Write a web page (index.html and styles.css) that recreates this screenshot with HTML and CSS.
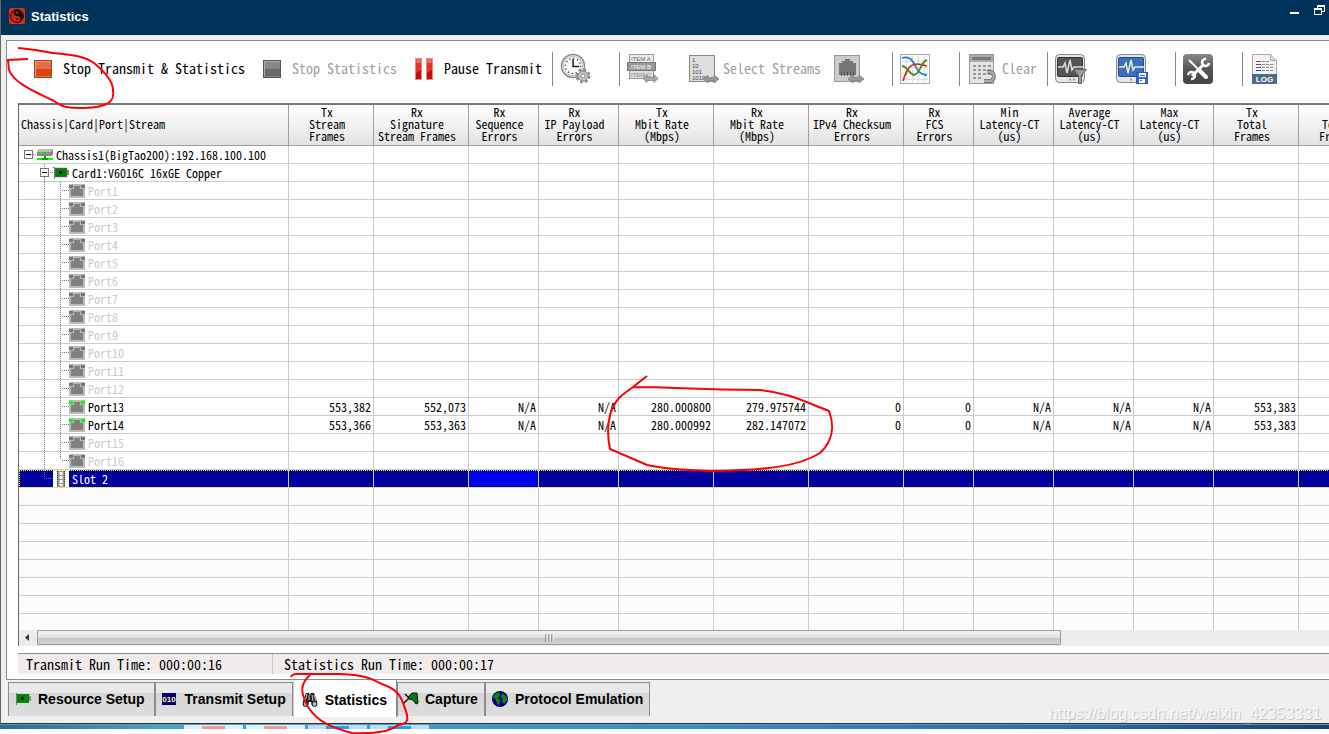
FILE: index.html
```html
<!DOCTYPE html>
<html lang="en">
<head>
<meta charset="utf-8">
<title>Statistics</title>
<link rel="stylesheet" href="styles.css">
</head>
<body>
<div class="window">
  <header class="titlebar">
    <svg class="logo" width="16" height="16" viewBox="0 0 16 16"><rect width="16" height="16" rx="2" fill="#e02a1c"/><circle cx="8" cy="8" r="6.5" fill="#1a0a0a"/><path d="M8 1.5a6.5 6.5 0 0 0 0 13 3.2 3.2 0 0 0 0-6.5 3.2 3.2 0 0 1 0-6.5z" fill="#c8281c"/><circle cx="8" cy="4.8" r="1" fill="#e02a1c"/><circle cx="8" cy="11.2" r="1" fill="#1a0a0a"/><circle cx="8" cy="8" r="6.5" fill="none" stroke="#3a0808"/></svg>
    <h1 class="title">Statistics</h1>
    <button class="winbtn minimize" aria-label="Minimize"><svg width="10" height="12" viewBox="0 0 10 12"><path d="M0 7h9v2H0z" fill="#fff"/></svg></button>
    <button class="winbtn" aria-label="Restore"><svg width="12" height="12" viewBox="0 0 12 12"><path d="M3.500 3V.5h7v6H8" fill="none" stroke="#fff"/><path d="M3 0h8v2H3z" fill="#fff"/><path d="M.5 3.500h7v6h-7z" fill="#003359" stroke="#fff"/><path d="M0 3h8v2H0z" fill="#fff"/></svg></button>
  </header>

  <main class="panel">
    <div class="toolbar">
      <button class="tool first"><svg width="18" height="18" viewBox="0 0 18 18"><rect x=".5" y=".5" width="17" height="17" fill="#d8441c" stroke="#bd3c14"/><path d="M1 1h16v8H1z" fill="#e0704c"/><path d="M1.500 16.500v-15h15" fill="none" stroke="#ef9a7a"/><path d="M2 16.500h15" stroke="#f06a30"/></svg><span>Stop Transmit &amp; Statistics</span></button>
      <button class="tool next" disabled><svg width="18" height="18" viewBox="0 0 18 18"><rect x=".5" y=".5" width="17" height="17" fill="#696969" stroke="#555"/><path d="M1 1h16v8H1z" fill="#888"/><path d="M1.500 16.500v-15h15" fill="none" stroke="#aaa"/><path d="M2 16.500h15" stroke="#888"/></svg><span>Stop Statistics</span></button>
      <button class="tool next"><svg width="18" height="22" viewBox="0 0 18 22"><g stroke="#e88a80"><rect x=".5" y=".5" width="6" height="21" fill="#e8352a"/><rect x="11.500" y=".5" width="6" height="21" fill="#e8352a"/></g><path d="M1 15l5-3v9H1zM12 15l5-3v9h-5z" fill="#c01010"/><path d="M1 1h5v4H1zM12 1h5v4h-5z" fill="#f06a5c"/></svg><span>Pause Transmit</span></button>
      <i class="sep near"></i>
      <button class="tool" aria-label="Timing settings"><svg width="32" height="32" viewBox="0 0 32 32"><circle cx="13" cy="13" r="11.500" fill="#eee" stroke="#8b8b8b" stroke-width="1.500"/><circle cx="13" cy="13" r="9.500" fill="#fafafa" stroke="#bbb"/><circle cx="13" cy="13" r="7.500" fill="none" stroke="#333" stroke-width="1.300" stroke-dasharray="1.200 2.727"/><path d="M13 6v7.500h6" fill="none" stroke="#222" stroke-width="1.500"/><circle cx="23" cy="23" r="6.200" fill="none" stroke="#888" stroke-width="2.400" stroke-dasharray="2.600 2.270"/><circle cx="23" cy="23" r="5" fill="#c4c4c4" stroke="#888"/><circle cx="23" cy="23" r="2" fill="#fff" stroke="#888"/></svg></button>
      <i class="sep"></i>
      <button class="tool" aria-label="Select items"><svg width="32" height="32" viewBox="0 0 32 32"><rect x="2.500" y="1.500" width="24" height="8" fill="#eee" stroke="#999"/><rect x="2.500" y="17.500" width="24" height="8" fill="#ddd" stroke="#999"/><rect x=".5" y="9.500" width="28" height="8" fill="#999" stroke="#777"/><g font-family="Liberation Sans" font-size="6"><text x="4" y="8" fill="#666">ITEM A</text><text x="4" y="16" fill="#fff">ITEM B</text><text x="4" y="24" fill="#888">ITEM C</text></g><path d="M16 25.500l4-4v3h7v-3l4 4-4 4v-2h-7v2z" fill="#aaa" stroke="#777" stroke-width=".7"/></svg></button>
      <button class="tool tight apart" disabled><svg width="32" height="32" viewBox="0 0 32 32"><rect x="1.500" y="2.500" width="25" height="26" fill="#dedede" stroke="#888"/><g font-family="Liberation Sans" font-size="6" fill="#444"><text x="4" y="9">1</text><text x="4" y="15">10</text><text x="4" y="21">101</text><text x="4" y="27">1010</text></g><path d="M15 26l5-4v2.500h6V22l5 4-5 4v-2.500h-6V30z" fill="#999" stroke="#777" stroke-width=".7"/></svg><span>Select Streams</span></button>
      <button class="tool near" aria-label="Select port"><svg width="32" height="32" viewBox="0 0 32 32"><rect x="1.500" y="2.500" width="25" height="26" fill="#ccc" stroke="#999"/><path d="M6 22V10h3V8h3V6h5v2h3v2h3v12z" fill="#777"/><path d="M8.500 19v4M11.500 19v4M14.500 19v4M17.500 19v4M20.500 19v4" stroke="#555"/><path d="M15 26l5-4v2.500h6V22l5 4-5 4v-2.500h-6V30z" fill="#999" stroke="#777" stroke-width=".7"/></svg></button>
      <i class="sep"></i>
      <button class="tool" aria-label="Chart"><svg width="32" height="32" viewBox="0 0 32 32"><rect x=".5" y="1.500" width="29" height="29" fill="#fafafa" stroke="#aaa"/><path d="M6.500 3v26M12.500 3v26M18.500 3v26M24.500 3v26M2 8.500h26M2 14.500h26M2 20.500h26M2 26.500h26" stroke="#ddd"/><g fill="none" stroke-width="1.800"><path d="M2 5c10-3 12 6 15 11 3 5 6 6 10 6" stroke="#2288cc"/><path d="M3 28c5-16 9-20 24-15" stroke="#d82a1e"/><path d="M2 13c5 0 7 8 12 9 6 0 7-14 13-15" stroke="#469118"/></g></svg></button>
      <i class="sep"></i>
      <button class="tool tight" disabled><svg width="32" height="32" viewBox="0 0 32 32"><rect x="2.500" y="1.500" width="24" height="29" fill="#e4e4e4" stroke="#999"/><rect x="3" y="2" width="23" height="7" fill="#aaa"/><rect x="5" y="4" width="19" height="3" fill="#777"/><g stroke="#999" stroke-width="2" stroke-dasharray="3 2"><path d="M6 13h18M6 17h18M6 21h18M6 25h10"/></g><path d="M17 28h7a5 5 0 0 0 0-9h-4" fill="none" stroke="#777" stroke-width="4"/><path d="M17 28h7a5 5 0 0 0 0-9h-4" fill="none" stroke="#aaa" stroke-width="2"/></svg><span>Clear</span></button>
      <i class="sep near"></i>
      <button class="tool" aria-label="Filter results"><svg width="32" height="32" viewBox="0 0 32 32"><rect x=".5" y="1.500" width="29" height="28" rx="4" fill="#e6e6e6" stroke="#888"/><rect x="2.500" y="4.500" width="25" height="19" rx="1" fill="#555" stroke="#333"/><path d="M3 14h5l2-4 2 10 3-13 2 10 2-3h9" fill="none" stroke="#ddd" stroke-width="1.500"/><path d="M14 26.500h2M18 26.500h2" stroke="#999" stroke-width="2"/><path d="M18.500 16.500h13l-5 6v8h-3v-8z" fill="#999" stroke="#666"/></svg></button>
      <button class="tool apart" aria-label="Save results"><svg width="32" height="32" viewBox="0 0 32 32"><rect x=".5" y="1.500" width="29" height="28" rx="4" fill="#e6e6e6" stroke="#888"/><rect x="2.500" y="4.500" width="25" height="19" rx="1" fill="#3b6fc4" stroke="#274a86"/><path d="M3 14h5l2-4 2 10 3-13 2 10 2-3h9" fill="none" stroke="#dff5c0" stroke-width="1.500"/><path d="M14 26.500h2" stroke="#999" stroke-width="2"/><rect x="20.500" y="19.500" width="11" height="11" fill="#3c68d0" stroke="#3058b8"/><path d="M23 20h7v4h-7zM23 26h6v4h-6z" fill="#fff"/><path d="M24 22.500h5M24 27.500h2" stroke="#3c68d0"/></svg></button>
      <i class="sep"></i>
      <button class="tool" aria-label="Options"><svg width="32" height="32" viewBox="0 0 32 32"><defs><linearGradient id="dark" x2="0" y2="1"><stop stop-color="#888"/><stop offset=".5" stop-color="#555"/><stop offset="1" stop-color="#444"/></linearGradient></defs><rect x="0" y="1" width="30" height="30" rx="4" fill="url(#dark)"/><path d="M6 7l9 9" stroke="#fff" stroke-width="2"/><path d="M16 17l7 7" stroke="#fff" stroke-width="4" stroke-linecap="round"/><path d="M9 23l12-12" stroke="#fff" stroke-width="3"/><path d="M23 6a3.500 3.500 0 1 0 3 4M5 22a3.500 3.500 0 1 1 3 4" fill="none" stroke="#fff" stroke-width="2.500"/></svg></button>
      <i class="sep"></i>
      <button class="tool" aria-label="Log"><svg width="32" height="32" viewBox="0 0 32 32"><path d="M2.500 1.500h18l6 6v23h-24z" fill="#f4f4f4" stroke="#aaa"/><path d="M20.500 1.500v6h6" fill="#ddd" stroke="#aaa"/><path d="M6 8.500h5M6 14.500h5" stroke="#d22"/><path d="M6 11.500h5M6 17.500h5" stroke="#25b"/><path d="M12 8.500h7M12 11.500h12M12 14.500h12M12 17.500h12" stroke="#888" stroke-dasharray="3 1"/><rect x="2" y="21" width="25" height="10" fill="#4d6d8c"/><text x="14.500" y="29" font-family="Liberation Sans" font-size="8" font-weight="700" fill="#fff" text-anchor="middle">LOG</text></svg></button>
    </div>

    <div class="gridbox">
      <div class="viewport">
        <table class="grid">
          <colgroup>
            <col class="c270"><col class="c85"><col class="c95"><col class="c70"><col class="c80"><col class="c95"><col class="c95"><col class="c95"><col class="c70"><col class="c80"><col class="c80"><col class="c80"><col class="c85"><col class="c85">
          </colgroup>
          <thead>
            <tr><th class="tree">Chassis|Card|Port|Stream</th><th>Tx<br>Stream<br>Frames</th><th>Rx<br>Signature<br>Stream Frames</th><th>Rx<br>Sequence<br>Errors</th><th>Rx<br>IP Payload<br>Errors</th><th>Tx<br>Mbit Rate<br>(Mbps)</th><th>Rx<br>Mbit Rate<br>(Mbps)</th><th>Rx<br>IPv4 Checksum<br>Errors</th><th>Rx<br>FCS<br>Errors</th><th>Min<br>Latency-CT<br>(us)</th><th>Average<br>Latency-CT<br>(us)</th><th>Max<br>Latency-CT<br>(us)</th><th>Tx<br>Total<br>Frames</th><th>Rx<br>Total<br>Frames</th></tr>
          </thead>
          <tbody id="rows"></tbody>
        </table>
      </div>
      <div class="scrollbar">
        <svg width="18" height="15" viewBox="0 0 18 15"><path d="M10 4v7L6 7.500z" fill="#333"/></svg>
        <div class="thumb"><svg width="9" height="8" viewBox="0 0 9 8"><path d="M1 0v8M4 0v8M7 0v8" stroke="#555"/><path d="M2 0v8M5 0v8M8 0v8" stroke="#fff"/></svg></div>
      </div>
    </div>

    <div class="status">
      <span class="status-item">Transmit Run Time: 000:00:16</span>
      <span class="status-item">Statistics Run Time: 000:00:17</span>
    </div>
  </main>

  <nav class="tabs">
    <button class="tab wide"><svg width="16" height="16" viewBox="0 0 16 16"><path d="M1.500 2v12M1 3.500h14" stroke="#777"/><rect x="2" y="3" width="12" height="9" fill="#080"/><rect x="6" y="6" width="3" height="3" fill="#000"/><rect x="14" y="5" width="2" height="5" fill="#888"/></svg>Resource Setup</button>
    <button class="tab"><svg width="16" height="16" viewBox="0 0 16 16"><rect y="2" width="14" height="12" fill="#000080"/><text x="7" y="11" font-family="Liberation Sans" font-size="8" fill="#ff6" text-anchor="middle">010</text></svg>Transmit Setup</button>
    <button class="tab active"><svg width="16" height="16" viewBox="0 0 16 16"><path d="M4 1h3l1 2 1-2h3l3 8v5h-5l-1-4H7l-1 4H1V9z" fill="#222"/><path d="M5 2l-2 7M7 3v5M10 3l1 6M12 3l2 6" stroke="#ccc"/><circle cx="3.500" cy="12" r="2.500" fill="#6dd" stroke="#111"/><circle cx="12.500" cy="12" r="2.500" fill="#6dd" stroke="#111"/></svg>Statistics</button>
    <button class="tab snug"><svg width="16" height="16" viewBox="0 0 16 16"><path d="M0 13l7-7M2 3l4 4" stroke="#111" stroke-width="1.500"/><path d="M5 6l4-4 5 0 1 10-2 1-3-4-4-1z" fill="#087a12" stroke="#111"/></svg>Capture</button>
    <button class="tab"><svg width="16" height="16" viewBox="0 0 16 16"><circle cx="8" cy="8" r="8" fill="#000080"/><path d="M3 3l4-2 1 3-2 3 2 2-1 5-2-1-1-4-3-3zM10 2l4 3 1 4-3 4-2-3 1-2-2-2z" fill="#0a8a14"/></svg>Protocol Emulation</button>
    <span class="watermark">https://blog.csdn.net/weixin_42353331</span>
  </nav>
</div>
<div class="taskbar"><i></i><i></i><i class="blue"></i><i class="blue"></i></div>

<svg class="ink" width="850" height="734" viewBox="0 0 850 734" aria-hidden="true">
  <path d="M18 48C34 49 44 52 53 53C72 55 84 56 94 63C106 73 113 83 113 90C115 102 108 107 84 108C66 108 62 107 54 101C38 93 14 84 9 70L8 60L28 59"/>
  <path d="M647 376L633 387C680 387 690 390 760 390C790 393 805 402 829 411C834 424 834 440 820 453C798 467 765 470 710 471C680 470 660 468 647 465L610 449C606 430 608 410 619 398C624 393 628 391 633 387"/>
  <path d="M291 677Q292 674 297 674L340 674C365 675 370 678 382 684C396 689 401 695 404 706C410 720 408 724 398 725C390 732 375 734 352 733C330 727 318 722 308 707C300 692 300 684 310 675"/>
</svg>
<script src="script.js"></script>
</body>
</html>
```

FILE: styles.css
```css
* { box-sizing: border-box; }

body {
  margin: 0;
  height: 100vh;
  padding-bottom: 5px;
  display: flex;
  flex-direction: column;
  overflow: hidden;
  background: #fff;
  color: #000;
  font-family: "Noto Sans Mono CJK SC", "Liberation Mono", monospace;
  font-size: 12px;
}

button {
  margin: 0;
  padding: 0;
  border: 0;
  background: none;
  color: inherit;
  font: inherit;
}

svg { display: block; flex: none; }

.window {
  flex: 1;
  min-height: 0;
  display: flex;
  flex-direction: column;
  border-left: 1px solid #666;
  border-bottom: 1px solid #333;
  background: #efefef;
}

.titlebar {
  flex: none;
  display: flex;
  align-items: center;
  height: 35px;
  padding: 0 3px 3px 8px;
  background: #003359;
}

.title {
  flex: 1;
  margin: 0 0 0 6px;
  color: #fff;
  font: bold 13px "Liberation Sans", sans-serif;
}

.winbtn { align-self: flex-start; margin-top: 5px; }
.minimize { margin-right: 14px; }

.panel {
  flex: 1;
  min-height: 0;
  display: flex;
  flex-direction: column;
  margin: 5px 0 0 5px;
  padding-bottom: 5px;
  border: 1px solid #8a8a92;
  border-right: 0;
  background: #fff;
}

.toolbar {
  flex: none;
  display: flex;
  align-items: center;
  height: 56px;
  overflow: hidden;
}

.tool {
  flex: none;
  display: flex;
  align-items: center;
  gap: 11px;
  font-size: 14px;
  line-height: 20px;
}
.tool span { padding-bottom: 2px; }
.tool:disabled { color: #a0a0a0; }
.tool.first { margin-left: 27px; }
.tool.next { margin-left: 18px; }
.tool.near { margin-left: 12px; }
.tool.apart { margin-left: 29px; }
.tool.tight { gap: 3px; }

.sep {
  flex: none;
  width: 1px;
  height: 34px;
  margin: 0 7px 0 27px;
  background: #888;
}
.sep.near { margin-left: 10px; }

.gridbox {
  flex: 1;
  min-height: 0;
  display: flex;
  flex-direction: column;
  margin: 6px 0 0 11px;
  border-top: 2px solid #777;
  border-left: 1px solid #666;
}

.viewport {
  flex: 1;
  min-height: 0;
  overflow: hidden;
  background: #fcfcfc;
}

.grid {
  width: 1165px;
  table-layout: fixed;
  border-collapse: separate;
  border-spacing: 0;
}
.c270 { width: 270px; }
.c95 { width: 95px; }
.c85 { width: 85px; }
.c80 { width: 80px; }
.c70 { width: 70px; }

.grid th {
  height: 41px;
  padding: 1px 8px 3px 0;
  border-right: 1px solid #a0a0a0;
  border-bottom: 1px solid #a0a0a0;
  background: linear-gradient(#fdfdfd, #f2f2f2 50%, #e2e2e2);
  font-weight: normal;
  line-height: 12px;
  white-space: nowrap;
}
.grid th.tree { padding-left: 2px; text-align: left; }

.grid td {
  height: 18px;
  padding: 0 2px 0 0;
  border-right: 1px solid #ccc;
  border-bottom: 1px solid #ccc;
  background: #fff;
  line-height: 17px;
  text-align: right;
  white-space: nowrap;
}
.grid .blank td { background: #fcfcfc; }
.node { display: flex; gap: 3px; height: 17px; }
.off .node { color: #ccc; }

.grid .selected td { background: #0000a0; color: #fff; }
.grid .selected td:nth-child(4) { background: #0000f0; }
.selected { outline: 1px dotted #ff0; outline-offset: -1px; }

.scrollbar {
  flex: none;
  display: flex;
  height: 16px;
  background: #ececec;
}
.thumb {
  display: flex;
  align-items: center;
  justify-content: center;
  width: 78.2%;
  height: 15px;
  border: 1px solid #999;
  border-radius: 1px;
  background: linear-gradient(#f4f4f4, #e0e0e0 50%, #c6c6ca 51%, #d0d0d4);
}

.status {
  flex: none;
  display: flex;
  height: 21px;
  margin: 7px 0 0 11px;
  border-top: 1px solid #8a8a92;
  background: #f0eceb;
  font-size: 14px;
  line-height: 20px;
}
.status-item { min-width: 254px; padding: 0 8px; }
.status-item + .status-item { padding-left: 11px; border-left: 1px solid #ccc; }

.tabs {
  flex: none;
  display: flex;
  align-items: flex-start;
  height: 43px;
  padding: 2px 8px 0 7px;
}
.tab {
  display: flex;
  align-items: center;
  gap: 7px;
  height: 34px;
  padding: 0 6px 2px;
  border: 1px solid #8a8a92;
  border-bottom: 0;
  background: linear-gradient(#e9e9e9 30%, #d6d6d6 31%, #dedede);
  font: bold 14px "Liberation Sans", sans-serif;
  white-space: nowrap;
}
.tab.wide { padding-right: 9px; }
.tab.snug { padding-left: 5px; gap: 6px; }
.tab.active {
  height: 37px;
  margin-top: -2px;
  padding: 2px 9px 0 8px;
  border-top: 0;
  border-left-color: #ccc;
  background: #fff;
}

.watermark {
  align-self: flex-end;
  margin-left: auto;
  color: #f8f8f8;
  font: 16px "Liberation Sans", sans-serif;
  text-shadow: 1px 1px 1px #bbb;
}

.taskbar {
  flex: none;
  display: flex;
  gap: 3px;
  height: 5px;
  padding-left: 184px;
  border-top: 1px solid #5599bb;
  background: linear-gradient(90deg, #2a6a9e, #4aa0cc 12%, #3a8fc8 50%, #2a6cae 80%, #1a3f78);
}
.taskbar i {
  width: 59px;
  border: solid #dff0fa;
  border-width: 1px 18px 0;
  background: #f09a90;
}
.taskbar .blue { background: #2a9be8; border-color: #b8e0f4; }

.ink {
  position: absolute;
  left: 0;
  top: 0;
  fill: none;
  stroke: #f00;
  stroke-width: 2;
  pointer-events: none;
}
```

FILE: script.js
```js
const COLUMNS = 13;
const dots = d => `<path d="${d}" stroke="#777" stroke-dasharray="1 1"/>`;
const expander = x =>
  `<rect x="${x + .5}" y="4.5" width="8" height="8" fill="#fff" stroke="#777"/><path d="M${x + 2} 8.5h5" stroke="#000"/>`;
const tree = (width, art) =>
  `<svg width="${width}" height="18" viewBox="0 0 ${width} 18" fill="none">${art}</svg>`;

const chassisArt = tree(34, expander(5) + dots("M14 8.500h4") +
  '<path d="M20 3h14v6l-2 1H18V6z" fill="#888"/><path d="M20 3h14l-2 3H18z" fill="#bbb"/><path d="M21 6h2v2h-2zM27 6h2v2h-2z" fill="#0f0"/><path d="M25 10h2v2h-2zM23 12h6v2h-6z" fill="#0a0"/><path d="M18 12h5v2h-5zM29 12h5v2h-5z" fill="#0f0"/>');
const cardArt = tree(50, dots("M25.500 0v4M25.500 13v5M31 8.500h4") + expander(21) +
  '<path d="M34 3h2v12h-1V4h-1z" fill="#888"/><rect x="36" y="4" width="12" height="9" fill="#008000" stroke="#777" stroke-width=".5"/><rect x="40" y="7" width="3" height="3" fill="#000"/><rect x="48" y="6" width="2" height="5" fill="#888"/>');
const slotArt = tree(50, dots("M25.500 0v8.500h9") +
  '<rect x="34" y="0" width="16" height="17" fill="#fff"/><rect x="38" y="1" width="8" height="16" fill="#999"/><path d="M42 2v14" stroke="#fff" stroke-width="3" stroke-dasharray="3 1"/><path d="M38.500 1v16M45.500 1v16" stroke="#333" stroke-dasharray="1 1"/>');
const portArt = (led, last) => tree(66, dots(`M25.500 0v18M41.500 0v${last ? 8 : 18}M43 8.500h7`) +
  `<rect x="50" y="2" width="16" height="14" fill="#bbb"/><path d="M52 7h3V4h6v3h3v7H52z" fill="#808080"/><path d="M50 3h4v3h-4zM62 3h4v3h-4z" fill="${led}"/>`);

const row = (cls, art, label, values = []) => {
  let cells = "";
  for (let i = 0; i < COLUMNS; i++) cells += `<td>${values[i] || ""}</td>`;
  const node = label ? `<div class="node">${art}<span>${label}</span></div>` : "";
  return `<tr class="${cls}"><td>${node}</td>${cells}</tr>`;
};

const stats = {
  13: ["553,382", "552,073", "N/A", "N/A", "280.000800", "279.975744", "0", "0", "N/A", "N/A", "N/A", "553,383"],
  14: ["553,366", "553,363", "N/A", "N/A", "280.000992", "282.147072", "0", "0", "N/A", "N/A", "N/A", "553,383"]
};

let html = row("", chassisArt, "Chassis1(BigTao200):192.168.100.100") +
  row("", cardArt, "Card1:V6016C 16xGE Copper");
for (let p = 1; p <= 16; p++) {
  const live = stats[p];
  html += row(live ? "" : "off", portArt(live ? "#0f0" : "#777", p === 16), "Port" + p, live);
}
html += row("selected", slotArt, "Slot 2");
for (let i = 0; i < 8; i++) html += row("blank");
document.getElementById("rows").innerHTML = html;
```
